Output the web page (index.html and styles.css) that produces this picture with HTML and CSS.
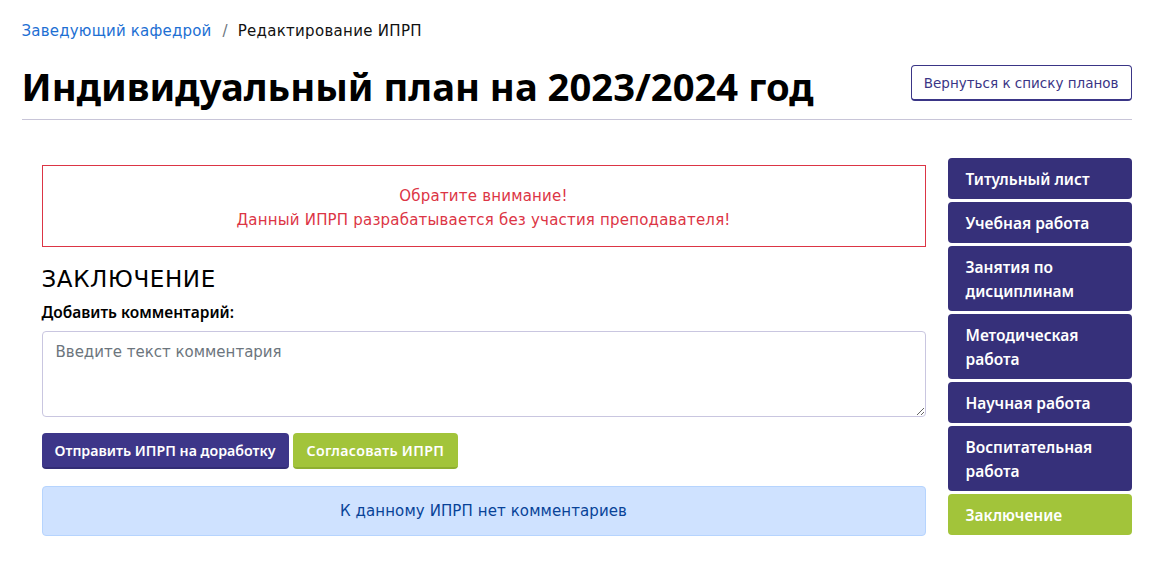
FILE: index.html
```html
<!DOCTYPE html>
<html lang="ru">
<head>
<meta charset="utf-8">
<title>ИПРП</title>
<link rel="stylesheet" href="styles.css">
</head>
<body>
<div class="container">
  <nav class="breadcrumb">
    <a href="#" class="crumb-link">Заведующий кафедрой</a>
    <span class="crumb-sep">/</span>
    <span class="crumb-current">Редактирование ИПРП</span>
  </nav>
  <header class="page-head">
    <h1 class="page-title">Индивидуальный план на 2023/2024 год</h1>
    <a href="#" class="btn-outline">Вернуться к списку планов</a>
  </header>
  <div class="layout">
    <main class="main">
      <div class="alert-danger">
        <p>Обратите внимание!</p>
        <p>Данный ИПРП разрабатывается без участия преподавателя!</p>
      </div>
      <h2 class="section-title">ЗАКЛЮЧЕНИЕ</h2>
      <label class="field-label" for="comment">Добавить комментарий:</label>
      <textarea id="comment" class="comment" placeholder="Введите текст комментария"></textarea>
      <div class="actions">
        <button class="btn btn-primary">Отправить ИПРП на доработку</button>
        <button class="btn btn-success">Согласовать ИПРП</button>
      </div>
      <div class="alert-info">К данному ИПРП нет комментариев</div>
    </main>
    <aside class="sidebar">
      <a href="#" class="side-item">Титульный лист</a>
      <a href="#" class="side-item">Учебная работа</a>
      <a href="#" class="side-item">Занятия по дисциплинам</a>
      <a href="#" class="side-item">Методическая работа</a>
      <a href="#" class="side-item">Научная работа</a>
      <a href="#" class="side-item">Воспитательная работа</a>
      <a href="#" class="side-item active">Заключение</a>
    </aside>
  </div>
</div>
</body>
</html>
```
FILE: styles.css
```css
* { box-sizing: border-box; }
html, body { margin: 0; padding: 0; background: #fff; }
body {
  font-family: "DejaVu Sans", "Noto Sans", sans-serif;
  color: #000;
  font-size: 15px;
}
.container {
  width: 1110px;
  margin: 0 auto;
  padding-top: 20px;
}
.breadcrumb {
  display: flex;
  align-items: center;
  height: 22px;
  font-size: 15px;
}
.crumb-link { color: #1d6fd3; text-decoration: none; letter-spacing: 0.2px; }
.crumb-sep { color: #6c757d; margin: 0 10px 0 11px; }
.crumb-current { color: #111; letter-spacing: 0.3px; }

.page-head {
  display: flex;
  justify-content: space-between;
  align-items: center;
  margin-top: 20px;
  padding-bottom: 9px;
  border-bottom: 1px solid #c8c5d8;
}
.page-title {
  margin: 0;
  font-family: "Noto Sans", sans-serif;
  font-size: 38.2px;
  font-weight: 700;
  line-height: 48px;
}
.btn-outline {
  display: inline-flex;
  align-items: center;
  height: 36px;
  padding: 0 12px;
  border: 1px solid #3a3586;
  border-bottom-width: 2px;
  border-radius: 4px;
  color: #3a3586;
  font-size: 13.5px;
  text-decoration: none;
  margin-top: -6px;
}

.layout {
  display: flex;
  margin-top: 38px;
  gap: 22px;
}
.main {
  width: 904px;
  padding-left: 20px;
  padding-top: 7px;
}
.alert-danger {
  border: 1px solid #dc3545;
  color: #dc3545;
  text-align: center;
  padding: 18px 0 13px;
  height: 82px;
}
.alert-danger p {
  margin: 0;
  line-height: 24px;
  font-size: 15px;
  letter-spacing: 0.2px;
}
.section-title {
  margin: 18px 0 0;
  font-size: 23px;
  font-weight: 400;
  line-height: 28px;
  letter-spacing: 0.6px;
}
.field-label {
  display: block;
  margin-top: 9px;
  font-family: "Noto Sans", sans-serif;
  font-size: 15.5px;
  font-weight: 600;
  line-height: 20px;
}
.comment {
  display: block;
  width: 100%;
  height: 86px;
  margin-top: 9px;
  border: 1px solid #c9c6e0;
  border-radius: 4px;
  padding: 11px 13px 10px;
  font-family: inherit;
  font-size: 15px;
  resize: vertical;
}
.comment::placeholder { color: #6c757d; }
.actions {
  display: flex;
  gap: 4px;
  margin-top: 16px;
}
.btn {
  height: 36px;
  border: 0;
  border-radius: 4px;
  color: #fff;
  font-family: "Noto Sans", sans-serif;
  font-size: 14.2px;
  font-weight: 600;
  padding: 0 13px;
  cursor: pointer;
}
.btn-primary { background: #3d3689; border-bottom: 2px solid #322c75; }
.btn-success { background: #a2c43a; border-bottom: 2px solid #8eaf30; padding: 0 14px; letter-spacing: 0.3px; }
.alert-info {
  margin-top: 17px;
  height: 50px;
  display: flex;
  align-items: center;
  justify-content: center;
  background: #cfe2ff;
  border: 1px solid #b6d4fe;
  border-radius: 4px;
  color: #084298;
  font-size: 15px;
  letter-spacing: 0.1px;
}

.sidebar {
  width: 184px;
  display: flex;
  flex-direction: column;
  gap: 3px;
}
.side-item {
  display: block;
  background: #36307a;
  color: #fff;
  text-decoration: none;
  border-radius: 4px;
  padding: 9px 18px 8px;
  font-family: "Noto Sans", sans-serif;
  font-size: 15.5px;
  font-weight: 600;
  line-height: 24px;
}
.side-item.active { background: #a2c43a; }
```
